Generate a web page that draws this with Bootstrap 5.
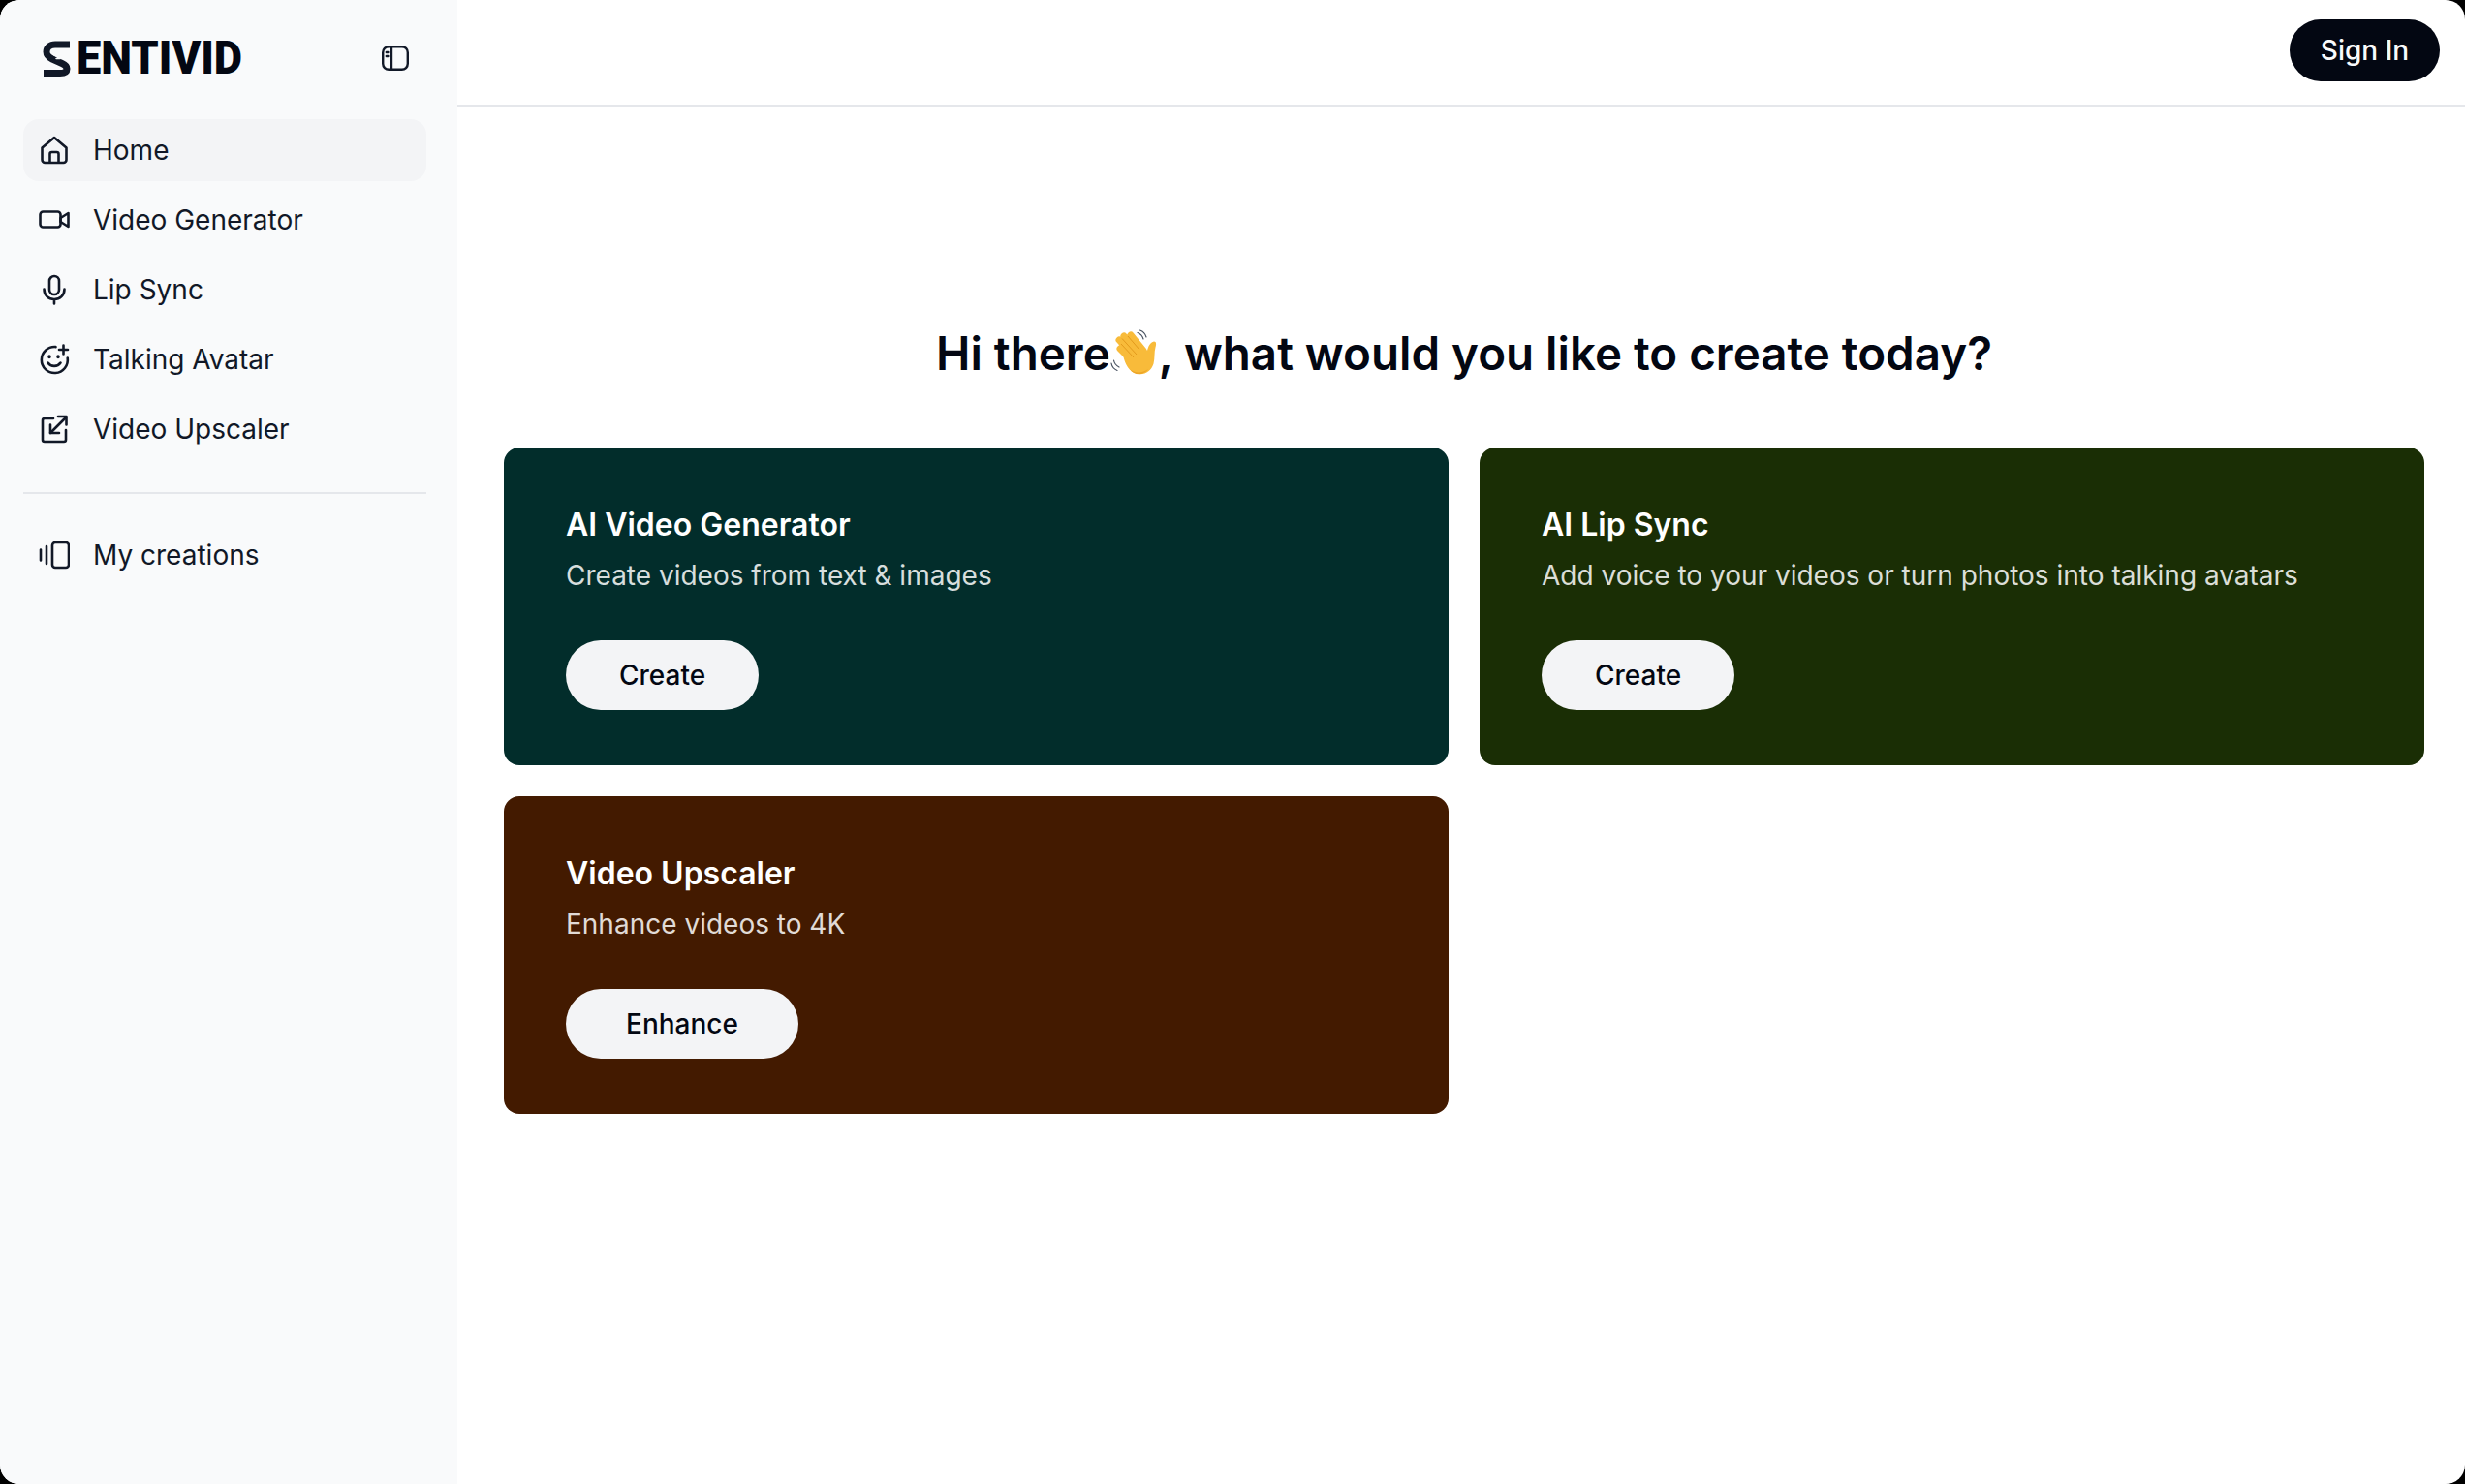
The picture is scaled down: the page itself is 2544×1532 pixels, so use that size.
<!DOCTYPE html>
<html lang="en">
<head>
  <meta charset="UTF-8">
  <title>Sentivid</title>
  <meta name="viewport" content="width=device-width, initial-scale=1">
  <link href="https://cdn.jsdelivr.net/npm/bootstrap@5.3.3/dist/css/bootstrap.min.css" rel="stylesheet">
  <style>
    html, body { height: 100%; background: #000; }
    body { font-family: Inter, "Liberation Sans", sans-serif; color: #030712; overflow: hidden; }
    .app-shell { height: 1532px; background: #fff; border-radius: 20px; overflow: hidden; }
    .side-panel { width: 472px; background: #f9fafb; padding: 0 32px 0 24px; flex-shrink: 0; }
    .brand-row { height: 123px; padding: 0 18px 3px 20px; }
    .brand-mark { width: 29px; height: 37px; color: #111827; flex-shrink: 0; }
    .brand-word { font-family: Roboto, sans-serif; font-weight: 900; font-size: 48px; line-height: 36px; color: #030712; display: inline-block; transform: scaleX(.94); transform-origin: left center; margin-left: 6px; width: 170px; }
    .side-link { height: 64px; margin-bottom: 8px; padding: 0 16px; border-radius: 16px; font-size: 28px; color: #111827; text-decoration: none; gap: 24px; }
    .side-link.active { background: #f3f4f6; }
    .side-link svg { width: 32px; height: 32px; flex-shrink: 0; }
    .side-rule { border-top: 2px solid #e5e7eb; margin: 25px 0 31px; opacity: 1; }
    .top-bar { height: 110px; border-bottom: 2px solid #e5e7eb; padding: 20px 26px 0; }
    .signin-btn { height: 64px; width: 155px; background: #030712; color: #f9fafb; border-radius: 32px; font-size: 28px; font-weight: 500; border: 0; padding: 0; }
    .signin-btn:hover { background: #030712; color: #f9fafb; }
    .content-wrap { padding: 0 42px 0 48px; }
    .page-title { font-size: 47.5px; font-weight: 600; line-height: 60px; margin: 225px 0 67px; text-align: center; color: #030712; }
    .wave-icon { width: 50px; height: 50px; vertical-align: -8px; }
    .tool-grid { display: grid; grid-template-columns: 1fr 1fr; gap: 32px; }
    .tool-card { height: 328px; border-radius: 16px; padding: 56px 64px 0; border: 0; color: #fff; }
    .tool-teal { background: #022d2b; }
    .tool-green { background: #1a2e05; }
    .tool-brown { background: #431a00; }
    .tool-name { font-size: 32px; font-weight: 600; line-height: 48px; margin: 0 0 4px; }
    .tool-desc { font-size: 28px; line-height: 48px; margin: 0 0 43px; color: rgba(255,255,255,.85); }
    .tool-btn { height: 72px; padding: 0 55px; background: #f3f4f6; color: #030712; border-radius: 36px; border: 0; font-size: 28px; font-weight: 500; }
    .tool-btn:hover { background: #f3f4f6; color: #030712; }
    .tool-btn-wide { padding: 0 62px; }
  </style>
</head>
<body>

<div class="app-shell d-flex">

  <!-- sidebar -->
  <aside class="side-panel">
    <div class="brand-row d-flex align-items-center justify-content-between">
      <div class="d-flex align-items-center">
        <svg class="brand-mark" viewBox="0 0 29 37" fill="none" stroke="currentColor" stroke-width="7" stroke-linejoin="round">
          <path d="M28 4H13C7.500 4 4 7.500 4 11.500c0 4 3 6 6 7.500l10 4.500c3.500 1.500 5 3 5 5.500 0 3.500-3 4.500-7 4.500H1"/>
          <path d="M11 14l7 4.500M18 18.500v-4M18 18.500h-4" stroke="#f9fafb" stroke-width="1.500" stroke-linecap="round"/>
        </svg>
        <span class="brand-word">ENTIVID</span>
      </div>
      <svg width="28" height="26" viewBox="0 0 28 26" fill="none" stroke="#111827" stroke-width="2.400">
        <rect x="1.200" y="1.200" width="25.600" height="23.600" rx="6"/>
        <path d="M10 1.200v23.600"/>
        <path d="M4.800 7h1.600M4.800 11h1.600" stroke-linecap="round"/>
      </svg>
    </div>

    <nav class="d-flex flex-column">
      <a class="side-link active d-flex align-items-center" href="#">
        <svg viewBox="0 0 32 32" fill="none" stroke="#111827" stroke-width="2.600" stroke-linejoin="round">
          <path d="M3.500 13.500 16 3l12.500 10.500V26a3 3 0 0 1-3 3H6.500a3 3 0 0 1-3-3z"/>
          <path d="M11.500 29V20a2 2 0 0 1 2-2h5a2 2 0 0 1 2 2v9"/>
        </svg>
        Home
      </a>
      <a class="side-link d-flex align-items-center" href="#">
        <svg viewBox="0 0 32 32" fill="none" stroke="#111827" stroke-width="2.600" stroke-linejoin="round">
          <rect x="1.500" y="7.500" width="21" height="16" rx="3"/>
          <path d="M22.500 14 30.500 9v14l-8-5z"/>
        </svg>
        Video Generator
      </a>
      <a class="side-link d-flex align-items-center" href="#">
        <svg viewBox="0 0 32 32" fill="none" stroke="#111827" stroke-width="2.600" stroke-linecap="round">
          <rect x="11" y="2" width="10" height="19" rx="5"/>
          <path d="M5.500 15.500C5.500 22 10 26 16 26s10.500-4 10.500-10.500M16 26v4.500"/>
        </svg>
        Lip Sync
      </a>
      <a class="side-link d-flex align-items-center" href="#">
        <svg viewBox="0 0 32 32" fill="none" stroke="#111827" stroke-width="2.600" stroke-linecap="round">
          <path d="M17.500 3.100A13.500 13.500 0 1 0 29.700 14.500"/>
          <path d="M25.500 1.500v9M21 6h9"/>
          <path d="M9.500 19.500c3 4.500 10 4.500 13 0"/>
          <path d="M11 13v.5M20 13v.5" stroke-width="3.400"/>
        </svg>
        Talking Avatar
      </a>
      <a class="side-link d-flex align-items-center" href="#">
        <svg viewBox="0 0 32 32" fill="none" stroke="#111827" stroke-width="2.600" stroke-linecap="round" stroke-linejoin="round">
          <path d="M15 5H6a2 2 0 0 0-2 2v20a2 2 0 0 0 2 2h20a2 2 0 0 0 2-2V17"/>
          <path d="M28 4 12 20"/>
          <path d="M20 3h8.500v8.500"/>
          <path d="M12 11.500V20h9"/>
        </svg>
        Video Upscaler
      </a>
      <hr class="side-rule">
      <a class="side-link d-flex align-items-center" href="#">
        <svg viewBox="0 0 32 32" fill="none" stroke="#111827" stroke-width="2.600" stroke-linecap="round" stroke-linejoin="round">
          <rect x="14" y="3" width="17" height="26" rx="3"/>
          <path d="M8 7v18M2 10.500v11"/>
        </svg>
        My creations
      </a>
    </nav>
  </aside>

  <!-- main -->
  <main class="flex-grow-1">
    <div class="top-bar d-flex align-items-start justify-content-end">
      <button class="btn signin-btn" type="button">Sign In</button>
    </div>

    <div class="content-wrap">
      <h1 class="page-title">Hi there<svg class="wave-icon" viewBox="0 0 50 50">
          <g fill="none" stroke="#f8bb3a" stroke-width="7" stroke-linecap="round">
            <path d="M10 20 24 34M9 11l17 19M14 7l16 19M21 6l13 16"/>
          </g>
          <path fill="#f8bb3a" d="M17 27l17-8 4 3c1-4 3-9 7-9.500 2.500 0 2.500 3 1.500 6-1.500 5-.5 11-2 17-2.500 8-10 12.500-18 10C20 44 15 37 13 26z"/>
          <path fill="none" stroke="#e39a1c" stroke-width="1" d="M11 15 24 29M12 9.500 27 26M18 7 30 21"/>
          <path fill="#eda628" d="M20 41c5 4.500 13 4.500 19 0-4 6-14 8-19 0z"/>
          <path fill="none" stroke="#4b5563" stroke-width="1.200" stroke-linecap="round" d="M3.500 32c.5 3 2.500 5.500 5.500 7M1 35c.5 3 2.500 6 6 7.500M28 3.500c3 1 5 3 6 6.500M30.500 1c3 1 5.500 3.500 6.500 7"/>
        </svg>, what would you like to create today?</h1>

      <div class="tool-grid">
        <div class="card tool-card tool-teal">
          <h2 class="tool-name">AI Video Generator</h2>
          <p class="tool-desc">Create videos from text &amp; images</p>
          <div><button class="btn tool-btn" type="button">Create</button></div>
        </div>
        <div class="card tool-card tool-green">
          <h2 class="tool-name">AI Lip Sync</h2>
          <p class="tool-desc">Add voice to your videos or turn photos into talking avatars</p>
          <div><button class="btn tool-btn" type="button">Create</button></div>
        </div>
        <div class="card tool-card tool-brown">
          <h2 class="tool-name">Video Upscaler</h2>
          <p class="tool-desc">Enhance videos to 4K</p>
          <div><button class="btn tool-btn tool-btn-wide" type="button">Enhance</button></div>
        </div>
      </div>
    </div>
  </main>

</div>

<script src="https://cdn.jsdelivr.net/npm/bootstrap@5.3.3/dist/js/bootstrap.bundle.min.js"></script>
</body>
</html>
